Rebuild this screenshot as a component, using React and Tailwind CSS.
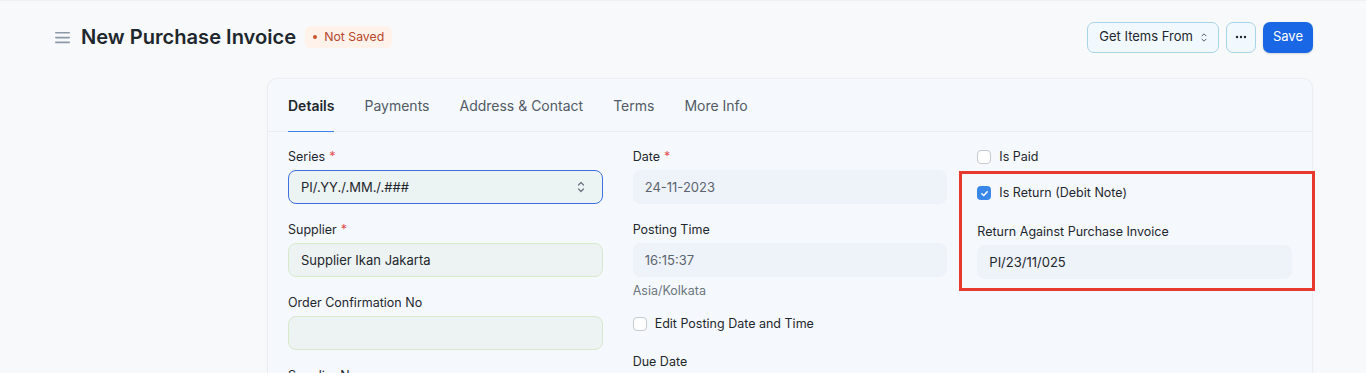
import React from "react";

const font = { fontFamily: "Inter, 'Noto Sans', sans-serif" };

function Checkbox({ checked }) {
  return checked ? (
    <span className="flex h-[14px] w-[14px] items-center justify-center rounded-[4px] bg-[#3a87ea]">
      <svg width="9" height="9" viewBox="0 0 10 10" fill="none">
        <path d="M2 5.2 L4.2 7.3 L8 3" stroke="white" strokeWidth="1.6" strokeLinecap="round" strokeLinejoin="round" />
      </svg>
    </span>
  ) : (
    <span className="h-[14px] w-[14px] rounded-[4px] border border-[#c4cad1] bg-white" />
  );
}

function Label({ children, req }) {
  return (
    <div className="h-[17px] text-[12.5px] leading-[18px] text-[#1f272e]">
      {children}
      {req && <span className="ml-[4px] text-[#e24c4c]">*</span>}
    </div>
  );
}

function Field({ label, req, value, variant = "gray", select, muted, below }) {
  const base = "mt-[5px] flex h-[34px] items-center rounded-[8px] px-[12px] text-[13px]";
  const cls =
    variant === "focus"
      ? "border border-[#3e6fe2] bg-[#ecf3f3]"
      : variant === "green"
      ? "border border-[#d8e8cb] bg-[#ecf3f2]"
      : "bg-[#eef2f9]";
  return (
    <div className="mb-[17px]">
      <Label req={req}>{label}</Label>
      <div className={`${base} ${cls} ${muted ? "text-[#5b6470]" : "text-[#1f272e]"}`}>
        <span className="flex-1 leading-[16px]">{value}</span>
        {select && (
          <svg width="10" height="14" viewBox="0 0 10 14" fill="none" className="mr-[4px]">
            <path d="M2.5 5 L5 2.5 L7.5 5" stroke="#6b7480" strokeWidth="1.2" strokeLinecap="round" strokeLinejoin="round" />
            <path d="M2.5 9 L5 11.5 L7.5 9" stroke="#6b7480" strokeWidth="1.2" strokeLinecap="round" strokeLinejoin="round" />
          </svg>
        )}
      </div>
      {below}
    </div>
  );
}

export default function App() {
  const tabs = ["Details", "Payments", "Address & Contact", "Terms", "More Info"];
  return (
    <div style={font} className="h-[373px] overflow-hidden border-t border-[#eef0f1] bg-[#f8f9fa]">
      <div className="pl-[55px] pr-[53px]">
        <div className="flex h-[72px] items-center justify-between">
          <div className="flex items-center">
            <svg width="15" height="13" viewBox="0 0 15 13" className="mr-[11px]">
              <rect x="0" y="1" width="15" height="1.6" rx="0.8" fill="#8d99a6" />
              <rect x="0" y="5.8" width="15" height="1.6" rx="0.8" fill="#8d99a6" />
              <rect x="0" y="10.6" width="15" height="1.6" rx="0.8" fill="#8d99a6" />
            </svg>
            <h1 className="text-[20.1px] font-semibold leading-[24px] text-[#1f272e]">New Purchase Invoice</h1>
            <span className="ml-[9px] flex h-[22px] items-center rounded-[6px] bg-[#fff2eb] px-[8px] text-[12.3px] text-[#b5472b]">
              <span className="mr-[7px] h-[4px] w-[4px] rounded-full bg-[#c8532f]" />
              Not Saved
            </span>
          </div>
          <div className="flex items-center gap-[7px]">
            <button className="flex h-[31px] items-center rounded-[7px] border border-[#a7d3e6] bg-[#f2f9fe] pl-[11px] pr-[10px] text-[13px] text-[#1f272e]">
              Get Items From
              <svg width="8" height="11" viewBox="0 0 8 11" fill="none" className="ml-[7px]">
                <path d="M2 3.8 L4 1.8 L6 3.8" stroke="#555e69" strokeWidth="1" strokeLinecap="round" strokeLinejoin="round" />
                <path d="M2 7.2 L4 9.2 L6 7.2" stroke="#555e69" strokeWidth="1" strokeLinecap="round" strokeLinejoin="round" />
              </svg>
            </button>
            <button className="flex h-[31px] w-[30px] items-center justify-center rounded-[7px] border border-[#a7d3e6] bg-[#f2f9fe] text-[#1f272e]">
              <svg width="12" height="4" viewBox="0 0 12 4">
                <circle cx="2" cy="2" r="1.2" fill="#1f272e" />
                <circle cx="6" cy="2" r="1.2" fill="#1f272e" />
                <circle cx="10" cy="2" r="1.2" fill="#1f272e" />
              </svg>
            </button>
            <button className="flex h-[31px] items-center rounded-[7px] bg-[#1a67e5] px-[10px] text-[13px] text-white shadow-[0_1px_2px_rgba(0,0,0,0.15)]">
              Save
            </button>
          </div>
        </div>

        <div className="mt-[5px] flex">
          <div className="w-[212px] shrink-0" />
          <div className="relative flex-1 rounded-t-[10px] border border-[#eceff1] bg-[#f5f9fd] shadow-[0_0_3px_rgba(0,0,0,0.03)]">
            <div className="flex h-[53px] gap-[30px] border-b border-[#ebeef0] px-[20px]">
              {tabs.map((t, i) => (
                <div
                  key={t}
                  className={`flex h-[53px] items-center border-b ${
                    i === 0 ? "border-[#3a83ea] font-semibold text-[#1f272e]" : "border-transparent text-[#525b66]"
                  } pt-[1px] text-[14px]`}
                >
                  {t}
                </div>
              ))}
            </div>

            <div className="grid grid-cols-3 gap-[30px] px-[20px] pt-[16px]">
              <div>
                <Field label="Series" req value="PI/.YY./.MM./.###" variant="focus" select />
                <Field label="Supplier" req value="Supplier Ikan Jakarta" variant="green" />
                <Field label="Order Confirmation No" value="" variant="green" />
                <Label>Supplier Name</Label>
              </div>
              <div>
                <Field label="Date" req value="24-11-2023" muted />
                <Field
                  label="Posting Time"
                  value="16:15:37"
                  muted
                  below={<div className="mt-[6px] text-[12.5px] leading-[16px] text-[#6c7680]">Asia/Kolkata</div>}
                />
                <div className="mt-[2px] flex h-[16px] items-center gap-[8px] text-[12.5px] text-[#1f272e]">
                  <Checkbox />
                  Edit Posting Date and Time
                </div>
                <div className="mt-[21px]">
                  <Label>Due Date</Label>
                </div>
              </div>
              <div>
                <div className="mt-[1px] flex h-[16px] items-center gap-[8px] text-[12.5px] text-[#1f272e]">
                  <Checkbox />
                  Is Paid
                </div>
                <div className="mt-[20px] flex h-[16px] items-center gap-[8px] text-[12.5px] text-[#1f272e]">
                  <Checkbox checked />
                  Is Return (Debit Note)
                </div>
                <div className="mt-[22px]">
                  <Field label="Return Against Purchase Invoice" value="PI/23/11/025" />
                </div>
              </div>
            </div>

            <div className="pointer-events-none absolute left-[691px] top-[92px] h-[120px] w-[356px] border-[3px] border-[#e8392f]" />
          </div>
        </div>
      </div>
    </div>
  );
}
